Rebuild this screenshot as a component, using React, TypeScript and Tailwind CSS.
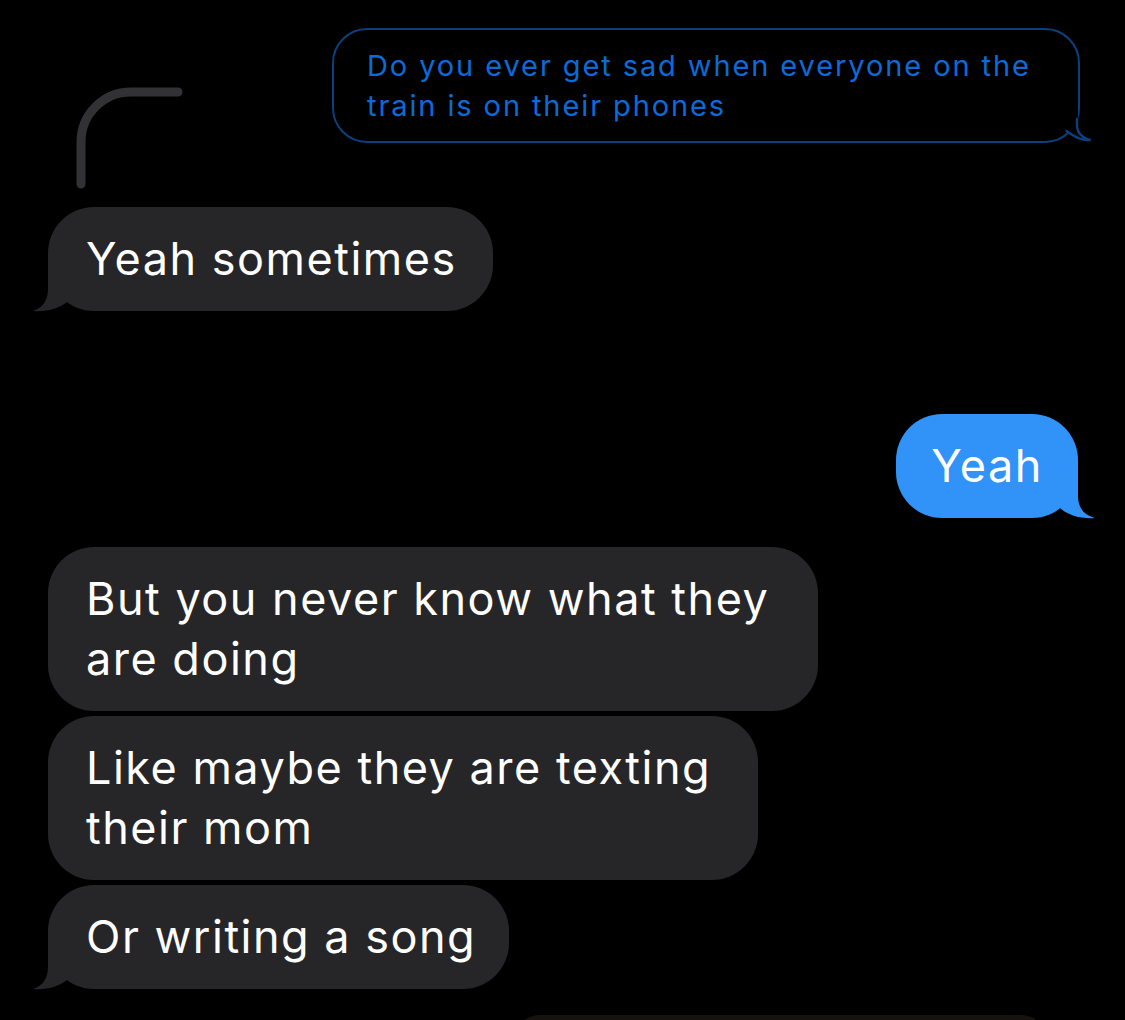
import React from 'react';

const FONT = { fontFamily: 'Inter, "Liberation Sans", sans-serif' };

// iMessage tail, drawn as if on the left side; mirrored for sent bubbles
const SolidTail: React.FC<{ color: string; edge: number; right?: boolean }> = ({ color, edge, right }) => {
  const e = edge;
  return (
    <svg
      width="60"
      height="50"
      viewBox="0 0 60 50"
      className={right ? 'absolute bottom-0 overflow-visible -scale-x-100' : 'absolute bottom-0 overflow-visible'}
      style={right ? { right: -e } : { left: -e }}
    >
      <path
        d={`M${e} 0 L${e} 28 C${e} 40 ${e - 6} 47 0 50 C13 51 25 48 34 41 L${e + 46} 4 Z`}
        fill={color}
      />
    </svg>
  );
};

const OutlineTail: React.FC = () => (
  <svg
    width="60"
    height="50"
    viewBox="0 0 60 50"
    className="absolute bottom-0 overflow-visible -scale-x-100"
    style={{ right: -14 }}
  >
    <path d="M14 15 L14 34 C14 42 8 48 0 50 C9 51 17 47 26 41 L49 15 Z" fill="#000" />
    <path
      d="M15 28 L15 34 C15 42 9 47 1.5 49 C10 50 17 46.5 25.5 40"
      fill="none"
      stroke="#0c3f7e"
      strokeWidth="2.4"
      strokeLinecap="round"
    />
  </svg>
);

const Received: React.FC<{ width: number; tail?: boolean; mt: string; children: React.ReactNode }> = ({
  width,
  tail,
  mt,
  children,
}) => (
  <div
    className={`relative ${mt} self-start rounded-[46px] bg-[#262629] pl-[38px] py-[22px] text-[45px] leading-[60px] tracking-[1.5px] text-white whitespace-nowrap`}
    style={{ width }}
  >
    {tail && <SolidTail color="#262629" edge={15} />}
    <span className="relative">{children}</span>
  </div>
);

export default function App() {
  return (
    <div className="w-full h-[1020px] overflow-hidden bg-black" style={FONT}>
      <div className="flex flex-col pt-[28px] pl-[48px] pr-[47px]">
        {/* question with reply line */}
        <div className="flex items-start justify-between">
          <svg width="120" height="112" viewBox="0 0 120 112" className="ml-[22px] mt-[56px]">
            <path
              d="M11 100 V58 A50 50 0 0 1 61 8 H108"
              fill="none"
              stroke="#323235"
              strokeWidth="9"
              strokeLinecap="round"
            />
          </svg>
          <div className="relative w-[748px] rounded-[35px] border-2 border-[#0c3f7e] pl-[33px] pt-[16px] pb-[15px] text-[29px] leading-[40px] tracking-[1.9px] text-[#0b6bd8] whitespace-nowrap mr-[-2px]">
            <OutlineTail />
            <span className="relative">
              Do you ever get sad when everyone on the
              <br />
              train is on their phones
            </span>
          </div>
        </div>

        <Received width={445} tail mt="mt-[11px]">
          Yeah sometimes
        </Received>

        <div className="relative mt-[103px] self-end w-[182px] rounded-[46px] bg-[#3192f8] py-[22px] text-center text-[45px] leading-[60px] tracking-[1.5px] text-white">
          <SolidTail color="#3192f8" edge={17} right />
          <span className="relative">Yeah</span>
        </div>

        <Received width={770} mt="mt-[29px]">
          But you never know what they
          <br />
          are doing
        </Received>
        <Received width={710} mt="mt-[5px]">
          Like maybe they are texting
          <br />
          their mom
        </Received>
        <Received width={461} tail mt="mt-[5px]">
          Or writing a song
        </Received>

        {/* top of an image message */}
        <div className="mt-[26px] mr-[31px] self-end w-[533px] h-[60px] rounded-t-[26px] bg-[#16130f]" />
      </div>
    </div>
  );
}
